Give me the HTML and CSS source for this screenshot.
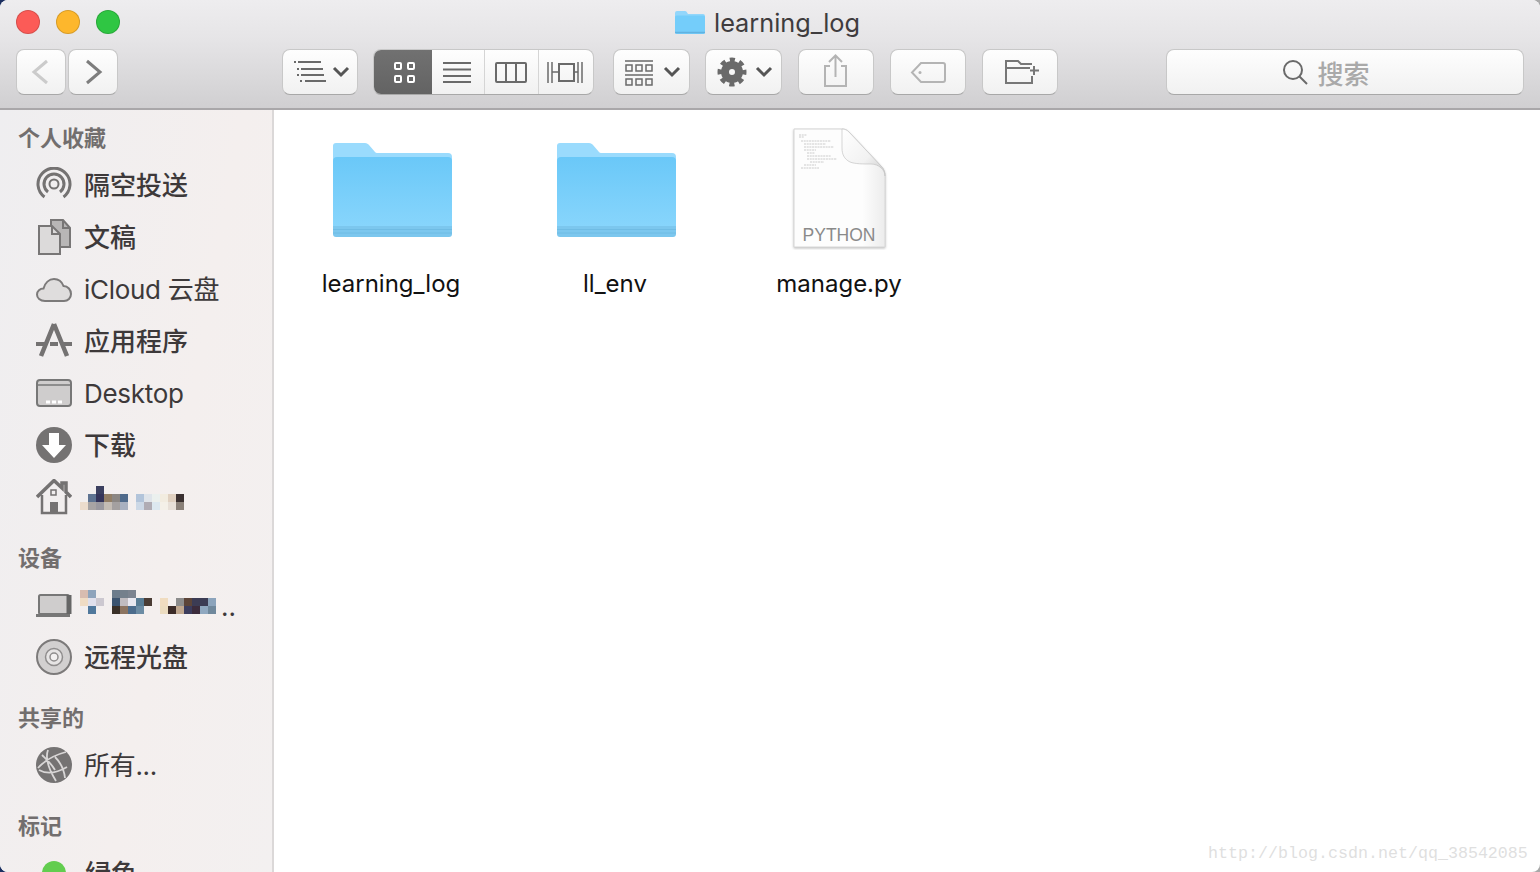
FILE: index.html
```html
<!DOCTYPE html>
<html lang="zh-CN">
<head>
    <meta charset="UTF-8">
    <title>learning_log</title>
    <link rel="stylesheet" href="styles.css">
</head>
<body>
<div class="window">
    <header class="toolbar">
        <div class="titlebar">
            <div class="lights">
                <span class="light red"></span>
                <span class="light yellow"></span>
                <span class="light green"></span>
            </div>
            <div class="title">
                <svg class="title-folder" width="30" height="24" viewBox="0 0 30 24">
                    <path d="M0 3a2 2 0 0 1 2-2h8a2 2 0 0 1 1.6.8L13 4h15a2 2 0 0 1 2 2v16a2 2 0 0 1-2 2H2a2 2 0 0 1-2-2z" fill="#92d6fb"/>
                    <path d="M0 7a1.500 1.500 0 0 1 1.500-1.500h27A1.500 1.500 0 0 1 30 7v15a2 2 0 0 1-2 2H2a2 2 0 0 1-2-2z" fill="#74cdfa"/>
                    <path d="M0 22.500h30" stroke="#62b2e0" stroke-width="1.500"/>
                </svg>
                <span>learning_log</span>
            </div>
            <div></div>
        </div>
        <div class="tools">
            <div class="nav">
                <button class="btn nav-btn">
                    <svg width="50" height="46" viewBox="0 0 50 46"><path d="M31 12L18 23l13 11" class="ico" stroke="#cbcbcb"/></svg>
                </button>
                <button class="btn nav-btn">
                    <svg width="50" height="46" viewBox="0 0 50 46"><path d="M19 12l13 11-13 11" class="ico" stroke="#7d7d7d"/></svg>
                </button>
            </div>
            <button class="btn view-menu">
                <svg width="76" height="46" viewBox="0 0 76 46">
                    <g stroke="#6a6a6a" stroke-width="2" fill="none">
                        <path d="M12 13h2M16 13h23M15 20h2M19 20h22M15 26h2M19 26h23M18 32h2M23 32h21"/>
                    </g>
                    <path d="M52 19l7 7 7-7" class="chev"/>
                </svg>
            </button>
            <div class="segment">
                <span class="seg seg-on">
                    <svg width="58" height="46" viewBox="0 0 58 46">
                        <g fill="none" stroke="#fff" stroke-width="2">
                            <rect x="22" y="14" width="6" height="6" rx="1"/>
                            <rect x="35" y="14" width="6" height="6" rx="1"/>
                            <rect x="22" y="27" width="6" height="6" rx="1"/>
                            <rect x="35" y="27" width="6" height="6" rx="1"/>
                        </g>
                    </svg>
                </span>
                <span class="seg seg-list">
                    <svg width="53" height="46" viewBox="0 0 53 46"><path d="M12 14h28M12 20.500h28M12 27h28M12 33h28" stroke="#6a6a6a" stroke-width="2" fill="none"/></svg>
                </span>
                <span class="seg seg-cols">
                    <svg width="54" height="46" viewBox="0 0 54 46">
                        <rect x="12" y="14" width="30" height="19" rx="1" fill="none" stroke="#6a6a6a" stroke-width="2"/>
                        <path d="M22 14v19M32 14v19" stroke="#6a6a6a" stroke-width="2"/>
                    </svg>
                </span>
                <span class="seg seg-flow">
                    <svg width="56" height="46" viewBox="0 0 56 46">
                        <rect x="21" y="15" width="15" height="17" fill="none" stroke="#6a6a6a" stroke-width="2"/>
                        <path d="M10 13v21M14 13v21M40 13v21M44 13v21" stroke="#6a6a6a" stroke-width="1.500" fill="none"/>
                        <path d="M14 23h7M36 23h4" stroke="#6a6a6a" stroke-width="1.500"/>
                    </svg>
                </span>
            </div>
            <button class="btn arrange">
                <svg width="77" height="46" viewBox="0 0 77 46">
                    <g fill="none" stroke="#6a6a6a" stroke-width="1.500">
                        <path d="M12 12h28M12 26h28"/>
                        <rect x="13" y="16" width="6" height="6"/><rect x="23" y="16" width="6" height="6"/><rect x="33" y="16" width="6" height="6"/>
                        <rect x="13" y="30" width="6" height="6"/><rect x="23" y="30" width="6" height="6"/><rect x="33" y="30" width="6" height="6"/>
                    </g>
                    <path d="M52 19l7 7 7-7" class="chev"/>
                </svg>
            </button>
            <button class="btn action">
                <svg width="77" height="46" viewBox="0 0 77 46">
                    <circle cx="27" cy="23" r="7" fill="none" stroke="#6a6a6a" stroke-width="8"/>
                    <circle cx="27" cy="23" r="12" fill="none" stroke="#6a6a6a" stroke-width="5" stroke-dasharray="5 4.420" stroke-dashoffset="2.500"/>
                    <path d="M52 19l7 7 7-7" class="chev"/>
                </svg>
            </button>
            <button class="btn share">
                <svg width="76" height="46" viewBox="0 0 76 46">
                    <path d="M32 17h-5v20h21V17h-5M37.500 28V7M31 13l6.500-6.500L44 13" fill="none" stroke="#b4b4b4" stroke-width="2"/>
                </svg>
            </button>
            <button class="btn tag">
                <svg width="76" height="46" viewBox="0 0 76 46">
                    <path d="M31 14h22a2 2 0 0 1 2 2v15a2 2 0 0 1-2 2H31l-9-9.500z" fill="none" stroke="#b4b4b4" stroke-width="2"/>
                    <circle cx="30" cy="23.500" r="1.500" fill="#b4b4b4"/>
                </svg>
            </button>
            <button class="btn newfolder">
                <svg width="76" height="46" viewBox="0 0 76 46">
                    <path d="M24 15v-3h12l3 3h11M50 27v7H24V15M24 19h24" fill="none" stroke="#777" stroke-width="2"/>
                    <path d="M52 17v9M48 21.500h9" stroke="#777" stroke-width="2"/>
                </svg>
            </button>
            <div class="search">
                <svg width="26" height="26" viewBox="0 0 26 26">
                    <circle cx="11" cy="11" r="9" fill="none" stroke="#6a6a6a" stroke-width="2"/>
                    <path d="M17.500 17.500L25 25" stroke="#6a6a6a" stroke-width="2"/>
                </svg>
                <span>搜索</span>
            </div>
        </div>
    </header>

    <div class="body">
        <aside class="sidebar">
            <h3 class="side-head first">个人收藏</h3>
            <div class="side-item">
                <svg class="side-icon" viewBox="0 0 36 36">
                    <g fill="none" stroke="#747272">
                        <path d="M8.500 30A16 16 0 1 1 27.500 30" stroke-width="3"/>
                        <path d="M12 25A10 10 0 1 1 24 25" stroke-width="3"/>
                        <circle cx="18" cy="17" r="4.500" stroke-width="2"/>
                    </g>
                </svg>
                <span class="label">隔空投送</span>
            </div>
            <div class="side-item">
                <svg class="side-icon" viewBox="0 0 36 36">
                    <path d="M15 1h12l7 8v19H15z" fill="#b8b6b6" stroke="#787676" stroke-width="2"/>
                    <path d="M3 7h13l8 8v20H3z" fill="#dcdada" stroke="#787676" stroke-width="2"/>
                    <path d="M16 7v8h8M27 1v8h7" fill="none" stroke="#787676" stroke-width="2"/>
                </svg>
                <span class="label">文稿</span>
            </div>
            <div class="side-item">
                <svg class="side-icon" viewBox="0 0 36 36">
                    <path d="M9 30C4 30 1 27 1 23.500C1 20 4 17.500 7.500 17.500C9 12 13 8 18 8C23 8 26 11 27.500 15C32 15 35 19 35 23C35 27 32 30 28 30Z" fill="#dfdddd" stroke="#7c7a7a" stroke-width="2"/>
                </svg>
                <span class="label latin">iCloud 云盘</span>
            </div>
            <div class="side-item">
                <svg class="side-icon" viewBox="0 0 36 36">
                    <path d="M18 1L5 33M18 1l13 32" fill="none" stroke="#747272" stroke-width="4.500"/>
                    <path d="M0 21h9M14 21h8M27 21h9" stroke="#747272" stroke-width="4"/>
                </svg>
                <span class="label">应用程序</span>
            </div>
            <div class="side-item">
                <svg class="side-icon" viewBox="0 0 36 36">
                    <rect x="1" y="5" width="34" height="26" rx="3" fill="#cfcdcd" stroke="#777" stroke-width="2"/>
                    <path d="M1 10h34" stroke="#777" stroke-width="1.500"/>
                    <path d="M10 27h4M16 27h4M22 27h4" stroke="#fff" stroke-width="3"/>
                </svg>
                <span class="latin">Desktop</span>
            </div>
            <div class="side-item">
                <svg class="side-icon" viewBox="0 0 36 36">
                    <circle cx="18" cy="18" r="18" fill="#747272"/>
                    <path d="M13 6h10v12h7L18 31 6 18h7z" fill="#fff"/>
                </svg>
                <span class="label">下载</span>
            </div>
            <div class="side-item">
                <svg class="side-icon" viewBox="0 0 36 36">
                    <path d="M6 16v18h24V16" fill="#f1eeee" stroke="#747272" stroke-width="2.500"/>
                    <path d="M1 18L18 1.500l8 7.500V4h4v9l5 5" fill="none" stroke="#747272" stroke-width="3.500"/>
                    <rect x="14" y="23" width="8" height="11" fill="#747272"/>
                    <rect x="15" y="11" width="5" height="5" fill="none" stroke="#747272" stroke-width="1.500"/>
                </svg>
                <svg class="mosaic mosaic-home" width="104" height="24" viewBox="0 0 104 24">
                    <rect x="16" y="0" width="8" height="8" fill="#3b3f5f"/>
                    <rect x="8" y="8" width="8" height="8" fill="#5e7391"/><rect x="16" y="8" width="8" height="8" fill="#34345a"/><rect x="24" y="8" width="8" height="8" fill="#927e66"/><rect x="32" y="8" width="8" height="8" fill="#8b8683"/><rect x="40" y="8" width="8" height="8" fill="#4f6a8b"/>
                    <rect x="56" y="8" width="8" height="8" fill="#b2c4da"/><rect x="64" y="8" width="8" height="8" fill="#dfe4ea"/><rect x="72" y="8" width="8" height="8" fill="#ebf0ee"/><rect x="80" y="8" width="8" height="8" fill="#f2ece0"/><rect x="88" y="8" width="8" height="8" fill="#e0d0c0"/><rect x="96" y="8" width="8" height="8" fill="#3a3030"/>
                    <rect x="0" y="16" width="8" height="8" fill="#ecdccc"/><rect x="8" y="16" width="8" height="8" fill="#a8a4a4"/><rect x="16" y="16" width="8" height="8" fill="#9a989f"/><rect x="24" y="16" width="8" height="8" fill="#c4bcb4"/><rect x="32" y="16" width="8" height="8" fill="#a4a0a0"/><rect x="40" y="16" width="8" height="8" fill="#a8b0c0"/>
                    <rect x="56" y="16" width="8" height="8" fill="#ccd8e6"/><rect x="64" y="16" width="8" height="8" fill="#b0acb4"/><rect x="72" y="16" width="8" height="8" fill="#dce8f0"/><rect x="80" y="16" width="8" height="8" fill="#f4f0e8"/><rect x="88" y="16" width="8" height="8" fill="#e8e0d8"/><rect x="96" y="16" width="8" height="8" fill="#8a8078"/>
                </svg>
            </div>

            <h3 class="side-head">设备</h3>
            <div class="side-item">
                <svg class="side-icon" viewBox="0 0 36 36">
                    <rect x="3" y="8" width="30" height="19" rx="1.500" fill="#cfcdcd" stroke="#777" stroke-width="2"/>
                    <path d="M0 28.500h34" stroke="#777" stroke-width="3"/>
                    <path d="M33 8v19" stroke="#666" stroke-width="5"/>
                </svg>
                <svg class="mosaic mosaic-mac" width="136" height="24" viewBox="0 0 136 24">
                    <rect x="0" y="0" width="8" height="8" fill="#d8bcb0"/><rect x="8" y="0" width="8" height="8" fill="#8ea4bc"/><rect x="32" y="0" width="8" height="8" fill="#6c7c8c"/><rect x="40" y="0" width="8" height="8" fill="#74808c"/><rect x="48" y="0" width="8" height="8" fill="#7c8490"/>
                    <rect x="0" y="8" width="8" height="8" fill="#f0dcc4"/><rect x="8" y="8" width="8" height="8" fill="#e0e0ec"/><rect x="16" y="8" width="8" height="8" fill="#ccc8d0"/><rect x="32" y="8" width="8" height="8" fill="#3c5470"/><rect x="40" y="8" width="8" height="8" fill="#c0bcc0"/><rect x="48" y="8" width="8" height="8" fill="#e8e8f0"/><rect x="56" y="8" width="8" height="8" fill="#587c94"/><rect x="64" y="8" width="8" height="8" fill="#4a3c34"/>
                    <rect x="80" y="8" width="8" height="8" fill="#f0dcc0"/><rect x="96" y="8" width="8" height="8" fill="#8c8c8c"/><rect x="104" y="8" width="8" height="8" fill="#5c4438"/><rect x="112" y="8" width="8" height="8" fill="#3c3c54"/><rect x="120" y="8" width="8" height="8" fill="#3c3c54"/><rect x="128" y="8" width="8" height="8" fill="#8ca4bc"/>
                    <rect x="8" y="16" width="8" height="8" fill="#50789c"/><rect x="32" y="16" width="8" height="8" fill="#3a3028"/><rect x="40" y="16" width="8" height="8" fill="#8c7460"/><rect x="48" y="16" width="8" height="8" fill="#4c6c8c"/><rect x="56" y="16" width="8" height="8" fill="#6c8ca4"/>
                    <rect x="80" y="16" width="8" height="8" fill="#ecdcc0"/><rect x="88" y="16" width="8" height="8" fill="#3c2c28"/><rect x="96" y="16" width="8" height="8" fill="#c0a890"/><rect x="104" y="16" width="8" height="8" fill="#3c3c5c"/><rect x="112" y="16" width="8" height="8" fill="#3c2c3c"/><rect x="120" y="16" width="8" height="8" fill="#90a8c0"/><rect x="128" y="16" width="8" height="8" fill="#70889c"/>
                </svg>
                <span class="more">..</span>
            </div>
            <div class="side-item">
                <svg class="side-icon" viewBox="0 0 36 36">
                    <circle cx="18" cy="18" r="17" fill="#d2d0d0" stroke="#7c7a7a" stroke-width="2"/>
                    <circle cx="18" cy="18" r="8.500" fill="#e6e4e4" stroke="#8f8d8d" stroke-width="1.500"/>
                    <circle cx="18" cy="18" r="4" fill="#f3f1f1" stroke="#8f8d8d" stroke-width="1.500"/>
                </svg>
                <span class="label">远程光盘</span>
            </div>

            <h3 class="side-head">共享的</h3>
            <div class="side-item">
                <svg class="side-icon" viewBox="0 0 36 36">
                    <circle cx="18" cy="18" r="18" fill="#757373"/>
                    <path d="M2 21C10 12 18 8 30 5M12 3c-3 8 0 18 8 31M19 10c5 5 9 12 10 21M3 23c7 4 16 4 28-3M6 8c4 4 9 8 13 15" fill="none" stroke="#d8d6d6" stroke-width="1.800"/>
                </svg>
                <span class="label latin">所有...</span>
            </div>

            <h3 class="side-head">标记</h3>
            <div class="side-item">
                <span class="tag-dot"></span>
                <span class="label">绿色</span>
            </div>
        </aside>

        <main class="files">
            <div class="file">
                <svg class="file-icon" viewBox="0 0 124 122">
                    <use href="#folder"/>
                </svg>
                <span>learning_log</span>
            </div>
            <div class="file">
                <svg class="file-icon" viewBox="0 0 124 122">
                    <use href="#folder"/>
                </svg>
                <span>ll_env</span>
            </div>
            <div class="file">
                <svg class="file-icon" viewBox="0 0 124 122">
                    <defs>
                        <linearGradient id="fold" x1="0" y1="0" x2="1" y2="1">
                            <stop offset="0" stop-color="#ffffff"/>
                            <stop offset=".6" stop-color="#f2f2f2"/>
                            <stop offset="1" stop-color="#c8c8c8"/>
                        </linearGradient>
                        <linearGradient id="page" x1="0" y1="0" x2="1" y2="0">
                            <stop offset=".75" stop-color="#fdfdfd"/>
                            <stop offset="1" stop-color="#ececec"/>
                        </linearGradient>
                    </defs>
                    <path d="M17 1h48c3 0 5 1 7 3l32 34c3 3 4 6 4 10v71H17z" class="doc"/>
                    <path d="M65 1c3 0 5 1 7 3l32 34c3 3 4 6 4 10 0-6-6-12-14-12-8 0-16 0-21-2-6-3-8-8-8-14z" fill="url(#fold)" stroke="#c4c4c4" stroke-width=".7"/>
                    <g stroke="#b4b4b4" stroke-width=".7" stroke-dasharray="2 .7" fill="none">
                        <path d="M22 7h8M22 9h5M24 13h30M27 16h22M27 19h30M27 22h12M30 25h8M30 28h24M30 31h30M33 34h14M27 37h12M24 40h18"/>
                    </g>
                    <text x="62" y="113" text-anchor="middle" class="doc-type">PYTHON</text>
                </svg>
                <span>manage.py</span>
            </div>
        </main>
    </div>

    <svg class="defs" width="0" height="0">
        <defs>
            <linearGradient id="front" x1="0" y1="0" x2="0" y2="1">
                <stop offset="0" stop-color="#6ac8f8"/>
                <stop offset="1" stop-color="#87d5fc"/>
            </linearGradient>
            <g id="folder">
                <path d="M4 18a3 3 0 0 1 3-3h29c2 0 3 1 4 2l6 7a3 3 0 0 0 2 1h71a4 4 0 0 1 4 4v70a4 4 0 0 1-4 4H7a3 3 0 0 1-3-3z" fill="#9adbfd"/>
                <path d="M4 33a4 4 0 0 1 4-4h111a4 4 0 0 1 4 4v65H4z" fill="url(#front)"/>
                <path d="M4 98h119v8a3 3 0 0 1-3 3H7a3 3 0 0 1-3-3z" fill="#7cc7ee"/>
                <path d="M4 101.500h119M4 105h119" stroke="#6fbce4" stroke-width="1"/>
            </g>
        </defs>
    </svg>

    <div class="watermark">http://blog.csdn.net/qq_38542085</div>
</div>
</body>
</html>
```

FILE: styles.css
```css
* {
    box-sizing: border-box;
}

html, body {
    margin: 0;
    height: 100%;
    overflow: hidden;
}

body {
    background: linear-gradient(90deg, #1b2f60 50%, #a8a8a8 50%);
    font-family: Inter, "Noto Sans CJK SC", sans-serif;
}

.window {
    position: relative;
    height: 872px;
    border-radius: 8px;
    overflow: hidden;
    background: #fff;
    display: flex;
    flex-direction: column;
}

/* toolbar */
.toolbar {
    height: 110px;
    flex: none;
    background: linear-gradient(#eeedef, #e6e5e7 35%, #d0cfd1);
    border-bottom: 2px solid #a9a7a9;
}

.titlebar {
    height: 44px;
    margin-bottom: 5px;
    display: grid;
    grid-template-columns: 1fr auto 1fr;
    align-items: center;
}

.lights {
    display: flex;
    gap: 16px;
    padding-left: 16px;
}

.light {
    width: 24px;
    height: 24px;
    border-radius: 50%;
    border: 1px solid rgba(0, 0, 0, 0.15);
}

.red { background: #fc5b57; }
.yellow { background: #fdb72c; }
.green { background: #2fc643; }

.title {
    display: flex;
    align-items: center;
    gap: 9px;
    font-size: 25.3px;
    color: #3f3c3e;
    margin-left: -5px;
}

.tools {
    display: flex;
    padding: 0 16px;
    height: 46px;
}

.btn {
    display: block;
    padding: 0;
    height: 46px;
    border: 1px solid #c8c8c8;
    border-bottom-color: #a8a8a8;
    border-radius: 8px;
    background: linear-gradient(#fefefe, #f1f1f1);
    overflow: hidden;
}

.btn svg, .seg svg {
    display: block;
    margin: -1px;
}

.ico {
    fill: none;
    stroke-width: 3;
}

.chev {
    fill: none;
    stroke: #555;
    stroke-width: 3;
}

.nav {
    display: flex;
    gap: 2px;
}

.nav-btn { width: 50px; }

.view-menu { width: 76px; margin-left: 164px; }
.arrange { width: 77px; margin-left: 19px; }
.action { width: 77px; margin-left: 15px; }
.share { width: 76px; margin-left: 16px; }
.tag { width: 76px; margin-left: 16px; }
.newfolder { width: 76px; margin-left: 16px; }

.segment {
    display: flex;
    width: 221px;
    margin-left: 15px;
    border: 1px solid #c8c8c8;
    border-bottom-color: #a8a8a8;
    border-radius: 8px;
    background: linear-gradient(#fefefe, #f1f1f1);
    overflow: hidden;
}

.seg {
    border-right: 1px solid #d5d5d5;
}

.seg-on {
    width: 58px;
    background: linear-gradient(#717171, #636363);
    border-right: 0;
}

.seg-list { width: 53px; }
.seg-cols { width: 54px; }
.seg-flow { flex: 1; border-right: 0; }

.search {
    width: 358px;
    margin-left: auto;
    height: 46px;
    padding-right: 38px;
    border: 1px solid #c8c8c8;
    border-bottom-color: #a8a8a8;
    border-radius: 8px;
    background: linear-gradient(#fefefe, #f1f1f1);
    display: flex;
    align-items: center;
    justify-content: center;
    gap: 9px;
    font-size: 26px;
    font-weight: 500;
    font-family: "Noto Sans CJK SC", sans-serif;
    color: #a9a9a9;
}

.body {
    flex: 1;
    display: flex;
    min-height: 0;
}

/* sidebar */
.sidebar {
    width: 274px;
    flex: none;
    padding-top: 7px;
    background: linear-gradient(100deg, #efeef0 0%, #f4efee 60%, #f3f0f0 100%);
    border-right: 2px solid #dbd8d8;
    overflow: hidden;
}

.side-head {
    height: 42px;
    line-height: 38px;
    margin: 14px 0 0;
    padding-left: 18px;
    font-size: 22px;
    font-weight: 700;
    font-family: "Noto Sans CJK SC", sans-serif;
    color: #726e6e;
}

.side-head.first {
    margin-top: 0;
}

.side-item {
    height: 52px;
    display: flex;
    align-items: center;
    gap: 12px;
    padding-left: 36px;
    font-size: 26px;
    color: #3d393a;
    white-space: nowrap;
}

.label {
    padding-bottom: 4px;
    font-weight: 500;
}

.latin {
    letter-spacing: -0.3px;
    font-weight: 400;
}

.side-icon {
    width: 36px;
    height: 36px;
    flex: none;
}

.mosaic {
    flex: none;
    filter: blur(0.6px);
}

.mosaic-home {
    margin-left: -4px;
    margin-top: 2px;
}

.mosaic-mac {
    margin-left: -4px;
    margin-top: -6px;
}

.more {
    margin-left: -7px;
    margin-top: 2px;
}

.tag-dot {
    width: 24px;
    height: 24px;
    margin: 0 7px 0 6px;
    border-radius: 50%;
    background: #62cd4f;
    flex: none;
}

/* files */
.files {
    flex: 1;
    display: grid;
    grid-template-columns: repeat(auto-fill, 224px);
    grid-auto-rows: 200px;
    padding: 18px 0 0 5px;
}

.file {
    display: flex;
    flex-direction: column;
    align-items: center;
    font-size: 24px;
    color: #111;
}

.file-icon {
    width: 124px;
    height: 122px;
    margin-bottom: 19px;
}

.doc {
    fill: url(#page);
    stroke: #d6d6d6;
    stroke-width: 1;
    filter: drop-shadow(0 1px 1px rgba(0, 0, 0, 0.25));
}

.doc-type {
    font-family: "Liberation Sans", sans-serif;
    font-size: 17.500px;
    fill: #8a8a8a;
}

.defs {
    position: absolute;
}

.watermark {
    position: absolute;
    left: 1208px;
    top: 844px;
    font-family: "Liberation Mono", monospace;
    font-size: 16.67px;
    line-height: 20px;
    color: #dfdfdf;
}
```
